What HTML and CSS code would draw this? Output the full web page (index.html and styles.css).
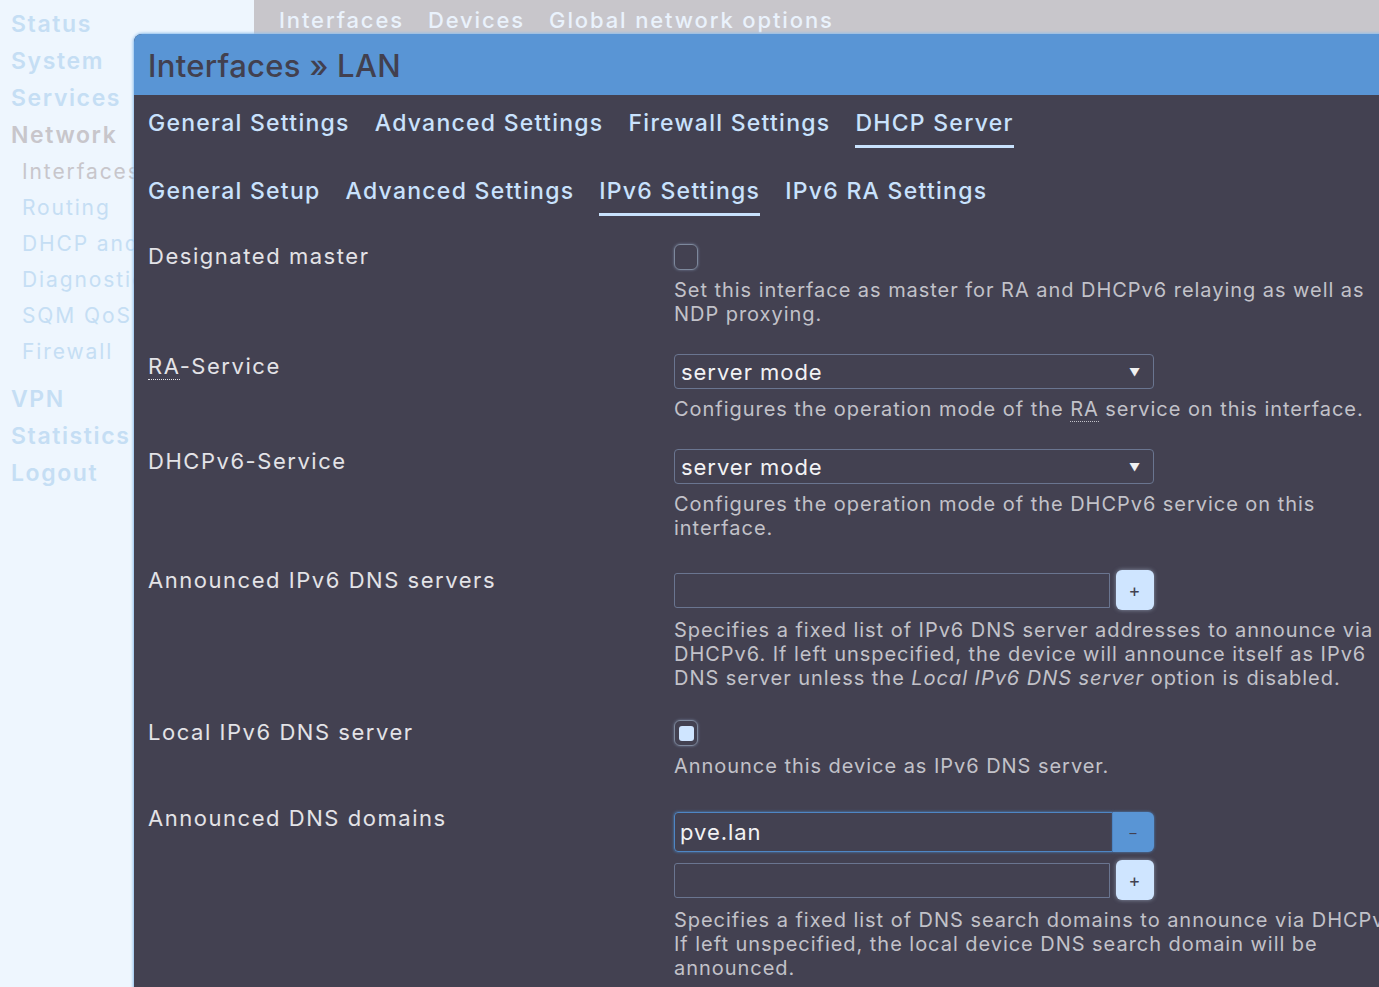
FILE: index.html
```html
<!DOCTYPE html>
<html>
<head>
	<meta charset="utf-8">
	<title>Interfaces - LAN</title>
	<link rel="stylesheet" href="styles.css">
</head>
<body>
	<div class="page">
		<div class="menu">
			<ul>
				<li>Status</li>
				<li>System</li>
				<li>Services</li>
				<li class="open">Network
					<ul class="sub">
						<li class="cur">Interfaces</li>
						<li>Routing</li>
						<li>DHCP and DNS</li>
						<li>Diagnostics</li>
						<li>SQM QoS</li>
						<li>Firewall</li>
					</ul>
				</li>
				<li>VPN</li>
				<li>Statistics</li>
				<li>Logout</li>
			</ul>
		</div>
		<div class="main">
			<div class="tabbar">
				<span>Interfaces</span>
				<span>Devices</span>
				<span>Global network options</span>
			</div>
		</div>
	</div>

	<div class="modal">
		<h3 class="modal-head">Interfaces » LAN</h3>
		<div class="modal-body">
			<ul class="tabs">
				<li>General Settings</li>
				<li>Advanced Settings</li>
				<li>Firewall Settings</li>
				<li class="active">DHCP Server</li>
			</ul>
			<ul class="tabs second">
				<li>General Setup</li>
				<li>Advanced Settings</li>
				<li class="active">IPv6 Settings</li>
				<li>IPv6 RA Settings</li>
			</ul>

			<div class="row">
				<label>Designated master</label>
				<div class="field">
					<div class="check"></div>
					<div class="desc">Set this interface as master for RA and DHCPv6 relaying as well as<br>NDP proxying.</div>
				</div>
			</div>

			<div class="row">
				<label><abbr>RA</abbr>-Service</label>
				<div class="field">
					<div class="select"><span>server mode</span><span class="arrow">&#9660;</span></div>
					<div class="desc">Configures the operation mode of the <abbr>RA</abbr> service on this interface.</div>
				</div>
			</div>

			<div class="row">
				<label>DHCPv6-Service</label>
				<div class="field">
					<div class="select"><span>server mode</span><span class="arrow">&#9660;</span></div>
					<div class="desc">Configures the operation mode of the DHCPv6 service on this<br>interface.</div>
				</div>
			</div>

			<div class="row">
				<label>Announced IPv6 DNS servers</label>
				<div class="field list">
					<div class="dyn">
						<div class="text"></div>
						<div class="btn">+</div>
					</div>
					<div class="desc">Specifies a fixed list of IPv6 DNS server addresses to announce via<br>DHCPv6. If left unspecified, the device will announce itself as IPv6<br>DNS server unless the <em>Local IPv6 DNS server</em> option is disabled.</div>
				</div>
			</div>

			<div class="row">
				<label>Local IPv6 DNS server</label>
				<div class="field">
					<div class="check on"></div>
					<div class="desc">Announce this device as IPv6 DNS server.</div>
				</div>
			</div>

			<div class="row">
				<label>Announced DNS domains</label>
				<div class="field list">
					<div class="dyn item">
						<div class="text focus">pve.lan</div>
						<div class="btn remove">&ndash;</div>
					</div>
					<div class="dyn">
						<div class="text"></div>
						<div class="btn">+</div>
					</div>
					<div class="desc">Specifies a fixed list of DNS search domains to announce via DHCPv6.<br>If left unspecified, the local device DNS search domain will be<br>announced.</div>
				</div>
			</div>
		</div>
	</div>
</body>
</html>
```

FILE: styles.css
```css
* {
	box-sizing: border-box;
}
html, body {
	height: 100%;
	margin: 0;
	overflow: hidden;
}
body {
	font-family: Inter, "Open Sans", sans-serif;
	letter-spacing: 0.06em;
	background-color: #eef6fe;
}
ul {
	list-style: none;
	margin: 0;
	padding: 0;
}

/* page behind the dialog */
.page {
	display: grid;
	grid-template-columns: 254px 1fr;
	height: 100%;
}
.menu {
	padding: 6px 0 0 11px;
}
.menu > ul > li {
	font-size: 23px;
	font-weight: 600;
	line-height: 37px;
	letter-spacing: 0.07em;
	color: #c5def4;
}
.menu > ul > li.open {
	color: #c8c6cb;
}
.menu .sub {
	padding-left: 11px;
	margin-bottom: 11px;
}
.menu .sub li {
	font-size: 21px;
	font-weight: 400;
	line-height: 36px;
	letter-spacing: 0.09em;
	color: #c5def4;
}
.menu .sub li.cur {
	color: #c8c6cb;
}
.tabbar {
	height: 34px;
	background-color: #c8c6cb;
	display: flex;
	align-items: center;
	gap: 24px;
	padding: 5px 0 0 25px;
	font-size: 22px;
	font-weight: 500;
	letter-spacing: 0.085em;
	color: #eaf2fc;
}

/* dialog */
.modal {
	position: absolute;
	top: 34px;
	left: 134px;
	width: 1400px;
	height: 1000px;
	border-radius: 8px 0 0 0;
	background-color: #434151;
	box-shadow: 0 0 3px 1px #8cbdec;
	overflow: hidden;
}
.modal-head {
	margin: 0;
	height: 61px;
	line-height: 63px;
	padding: 0 14px;
	background-color: #5995d5;
	color: #42404f;
	font-size: 31px;
	font-weight: 500;
	letter-spacing: 0.01em;
}
.modal-body {
	padding: 13px 14px;
}
.tabs {
	display: flex;
	gap: 25px;
	font-size: 23px;
	font-weight: 500;
	line-height: 30px;
	letter-spacing: 0.055em;
	color: #c9e2fd;
}
.tabs li {
	padding-bottom: 7px;
	border-bottom: 3px solid transparent;
}
.tabs li.active {
	border-bottom-color: #c9e2fd;
}
.tabs.second {
	margin-top: 28px;
}

/* form rows */
.row {
	display: grid;
	grid-template-columns: 526px 1fr;
	margin-top: 28px;
}
.row label {
	font-size: 22px;
	line-height: 24px;
	letter-spacing: 0.07em;
	color: #e3e3e7;
}
.field.list {
	padding: 2px 0;
}
abbr {
	text-decoration: none;
	border-bottom: 1px dotted currentColor;
}
.desc {
	margin-top: 8px;
	font-size: 20px;
	line-height: 24px;
	color: #c2c2c9;
	white-space: nowrap;
}
.desc em {
	font-style: italic;
}
.check {
	width: 24px;
	height: 26px;
	border: 1px solid #7d889c;
	border-radius: 6px;
	box-shadow: 0 0 3px rgba(170, 200, 240, 0.45);
	display: flex;
	align-items: center;
	justify-content: center;
}
.check.on::after {
	content: "";
	width: 15px;
	height: 15px;
	border-radius: 3px;
	background-color: #cfe5ff;
}
.select {
	width: 480px;
	height: 35px;
	border: 1px solid #6a7590;
	border-radius: 4px;
	display: flex;
	align-items: center;
	justify-content: space-between;
	padding: 0 12px 0 6px;
	font-size: 22px;
	color: #f2f2f4;
}
.select .arrow {
	font-size: 11px;
	color: #f0f0f0;
}
.dyn {
	width: 480px;
	display: flex;
	align-items: center;
	gap: 6px;
}
.dyn.item {
	gap: 0;
	margin: 4px 0 8px;
}
.dyn .text {
	flex: 1;
	height: 35px;
	border: 1px solid #6a7590;
	border-radius: 3px 0 0 3px;
	padding: 0 5px;
	font-size: 22px;
	line-height: 38px;
	color: #f2f2f4;
}
.dyn .text.focus {
	height: 40px;
	border-color: #4e86c4;
	box-shadow: 0 0 3px #4e86c4;
	border-radius: 4px 0 0 4px;
}
.btn {
	width: 38px;
	height: 40px;
	border-radius: 6px;
	background-color: #cfe5ff;
	box-shadow: 0 0 4px rgba(207, 229, 255, 0.5);
	color: #434151;
	font-size: 18px;
	display: flex;
	align-items: center;
	justify-content: center;
}
.btn.remove {
	width: 41px;
	background-color: #5995d5;
	box-shadow: 0 0 3px #4e86c4;
	border-radius: 0 6px 6px 0;
	font-size: 14px;
}
```
